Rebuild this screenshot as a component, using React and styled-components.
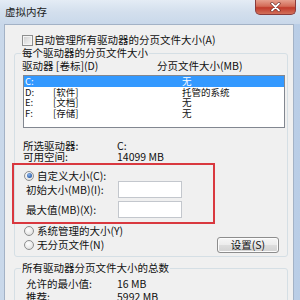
import React from "react";
import styled, { createGlobalStyle } from "styled-components";

const Global = createGlobalStyle`
  html, body { margin: 0; padding: 0; }
  body { width: 300px; height: 300px; overflow: hidden; background: #c4d5ea; }
  * { box-sizing: border-box; }
`;

const Window = styled.div`
  position: relative;
  width: 300px;
  height: 300px;
  display: flex;
  flex-direction: column;
  background: linear-gradient(90deg, #c9d8ea 0%, #d4e0ee 50%, #b9cde6 100%);
  font-family: "Noto Sans CJK SC", "Noto Sans", sans-serif;
  font-size: 10.5px;
  color: #111;
  overflow: hidden;
`;

const TitleBar = styled.div`
  height: 24px;
  flex: none;
  display: flex;
  align-items: flex-start;
  padding-left: 5px;
  background: linear-gradient(180deg, #e4ecf5 0%, #d3dfed 50%, #c9d8ea 100%);
`;

const Title = styled.span`
  line-height: 12px;
  margin-top: 6px;
  font-size: 10.5px;
  color: #1b1b1b;
`;

const CloseButton = styled.div`
  margin-left: auto;
  margin-right: 4px;
  width: 41px;
  height: 15px;
  border: 1px solid #8a3b3b;
  border-top: none;
  border-radius: 0 0 5px 5px;
  background: linear-gradient(180deg, #e6a08e 0%, #d36b57 45%, #c13b2b 55%, #d2705a 100%);
  display: flex;
  align-items: center;
  justify-content: center;
`;

const Client = styled.div`
  flex: 1;
  margin: 0 6px 0 4px;
  background: #f0f0f0;
  border: 1px solid #a3b2c6;
  border-bottom: none;
  padding-top: 9px;
  display: flex;
  flex-direction: column;
`;

const CheckRow = styled.div`
  display: flex;
  align-items: center;
  height: 12px;
  line-height: 12px;
  padding-left: 17px;
  gap: 1px;
`;

const CheckBox = styled.span`
  width: 11px;
  height: 11px;
  border: 1px solid #8e8f8f;
  background: linear-gradient(135deg, #cbcbcb 0%, #e4e4e4 50%, #f6f6f6 100%);
  box-shadow: inset 0 0 0 1px #f4f4f4;
  flex: none;
`;

const Group = styled.fieldset`
  margin: ${(p) => p.$top}px 5px 0 9px;
  padding: 0 0 ${(p) => p.$bottom}px 0;
  border: 1px solid #d5dfe5;
  border-radius: 3px;
  min-width: 0;
`;

const Legend = styled.legend`
  margin-left: 6px;
  padding: 0 1px;
  line-height: 12px;
  height: 12px;
`;

const HeaderRow = styled.div`
  display: flex;
  line-height: 12px;
  height: 12px;
  margin-top: 1px;
  padding-left: 7px;
`;

const HeaderCell = styled.span`
  width: ${(p) => p.$w || "auto"};
  flex: none;
`;

const ListBox = styled.div`
  margin: 3px 2px 0 8px;
  height: 53px;
  background: #fff;
  border: 1px solid #828790;
  font-size: 9.5px;
`;

const ListRow = styled.div`
  display: grid;
  grid-template-columns: 28px 129px 1fr;
  height: 10.5px;
  line-height: 10.5px;
  padding-left: 1px;
  background: ${(p) => (p.$selected ? "#3399ff" : "transparent")};
  color: ${(p) => (p.$selected ? "#fff" : "#111")};
`;

const InfoRow = styled.div`
  display: grid;
  grid-template-columns: ${(p) => p.$labelW}px 1fr;
  height: ${(p) => p.$h || 11}px;
  line-height: ${(p) => p.$h || 11}px;
  margin-top: ${(p) => p.$top || 0}px;
  padding-left: ${(p) => p.$left}px;
`;

const RadioRow = styled.label`
  display: flex;
  align-items: center;
  gap: 3px;
  height: ${(p) => p.$h || 12}px;
  line-height: ${(p) => p.$h || 12}px;
  margin-top: ${(p) => p.$top || 0}px;
  padding-left: 9px;
`;

const Radio = styled.span`
  width: 10px;
  height: 10px;
  border-radius: 50%;
  border: 1px solid #8e8f8f;
  background: radial-gradient(circle at 40% 35%, #ffffff 0%, #e8e8e8 60%, #d0d0d0 100%);
  display: flex;
  align-items: center;
  justify-content: center;
  flex: none;
  &::after {
    content: "";
    display: ${(p) => (p.$checked ? "block" : "none")};
    width: 5px;
    height: 5px;
    border-radius: 50%;
    background: radial-gradient(circle at 40% 35%, #8fb5e8 0%, #2f63b0 70%, #1b4a94 100%);
  }
`;

const FieldRow = styled.div`
  display: grid;
  grid-template-columns: 92px 64px;
  align-items: center;
  height: 17px;
  margin-top: ${(p) => p.$top || 0}px;
  padding-left: 11px;
`;

const TextInput = styled.div`
  height: 17px;
  background: #fff;
  border: 1px solid #c3c7cd;
`;

const BottomRow = styled.div`
  display: flex;
  align-items: flex-start;
  margin-top: 7px;
`;

const RadioColumn = styled.div`
  display: flex;
  flex-direction: column;
`;

const Button = styled.div`
  margin: 12px 8px 0 auto;
  width: 62px;
  height: 16px;
  border: 1px solid #8d8d8d;
  border-radius: 3px;
  background: linear-gradient(180deg, #f6f6f6 0%, #ececec 48%, #dddddd 52%, #d2d2d2 100%);
  box-shadow: inset 0 0 0 1px #fcfcfc;
  display: flex;
  align-items: center;
  justify-content: center;
  line-height: 12px;
`;

const Annotation = styled.div`
  position: absolute;
  left: 12px;
  top: 163px;
  width: 203px;
  height: 61px;
  border: 2.5px solid #d9383f;
  pointer-events: none;
`;

const drives = [
  { d: "C:", label: "", size: "无", selected: true },
  { d: "D:", label: "[软件]", size: "托管的系统" },
  { d: "E:", label: "[文档]", size: "无" },
  { d: "F:", label: "[存储]", size: "无" },
];

export default function App() {
  return (
    <>
      <Global />
      <Window>
        <TitleBar>
          <Title>虚拟内存</Title>
          <CloseButton>
            <svg width="11" height="10" viewBox="0 0 11 10">
              <path d="M2 1.5 L9 8.5 M9 1.5 L2 8.5" stroke="#5a1a14" strokeWidth="3" strokeLinecap="round" />
              <path d="M2 1.5 L9 8.5 M9 1.5 L2 8.5" stroke="#ffffff" strokeWidth="1.8" strokeLinecap="round" />
            </svg>
          </CloseButton>
        </TitleBar>
        <Client>
          <CheckRow>
            <CheckBox />
            <span>自动管理所有驱动器的分页文件大小(A)</span>
          </CheckRow>
          <Group $top={1} $bottom={3}>
            <Legend>每个驱动器的分页文件大小</Legend>
            <HeaderRow>
              <HeaderCell $w="135px">驱动器 [卷标](D)</HeaderCell>
              <HeaderCell>分页文件大小(MB)</HeaderCell>
            </HeaderRow>
            <ListBox>
              {drives.map((r) => (
                <ListRow key={r.d} $selected={r.selected}>
                  <span>{r.d}</span>
                  <span>{r.label}</span>
                  <span>{r.size}</span>
                </ListRow>
              ))}
            </ListBox>
            <InfoRow $labelW={94} $left={8} $top={12}>
              <span>所选驱动器:</span>
              <span>C:</span>
            </InfoRow>
            <InfoRow $labelW={94} $left={8}>
              <span>可用空间:</span>
              <span>14099 MB</span>
            </InfoRow>
            <RadioRow $top={8} $h={11}>
              <Radio $checked />
              <span>自定义大小(C):</span>
            </RadioRow>
            <FieldRow>
              <span>初始大小(MB)(I):</span>
              <TextInput />
            </FieldRow>
            <FieldRow $top={3}>
              <span>最大值(MB)(X):</span>
              <TextInput />
            </FieldRow>
            <BottomRow>
              <RadioColumn>
                <RadioRow>
                  <Radio />
                  <span>系统管理的大小(Y)</span>
                </RadioRow>
                <RadioRow $top={2}>
                  <Radio />
                  <span>无分页文件(N)</span>
                </RadioRow>
              </RadioColumn>
              <Button>设置(S)</Button>
            </BottomRow>
          </Group>
          <Group $top={5} $bottom={3}>
            <Legend>所有驱动器分页文件大小的总数</Legend>
            <InfoRow $labelW={91} $left={11} $top={4} $h={12}>
              <span>允许的最小值:</span>
              <span>16 MB</span>
            </InfoRow>
            <InfoRow $labelW={91} $left={11} $top={1} $h={12}>
              <span>推荐:</span>
              <span>5992 MB</span>
            </InfoRow>
          </Group>
        </Client>
        <Annotation />
      </Window>
    </>
  );
}
